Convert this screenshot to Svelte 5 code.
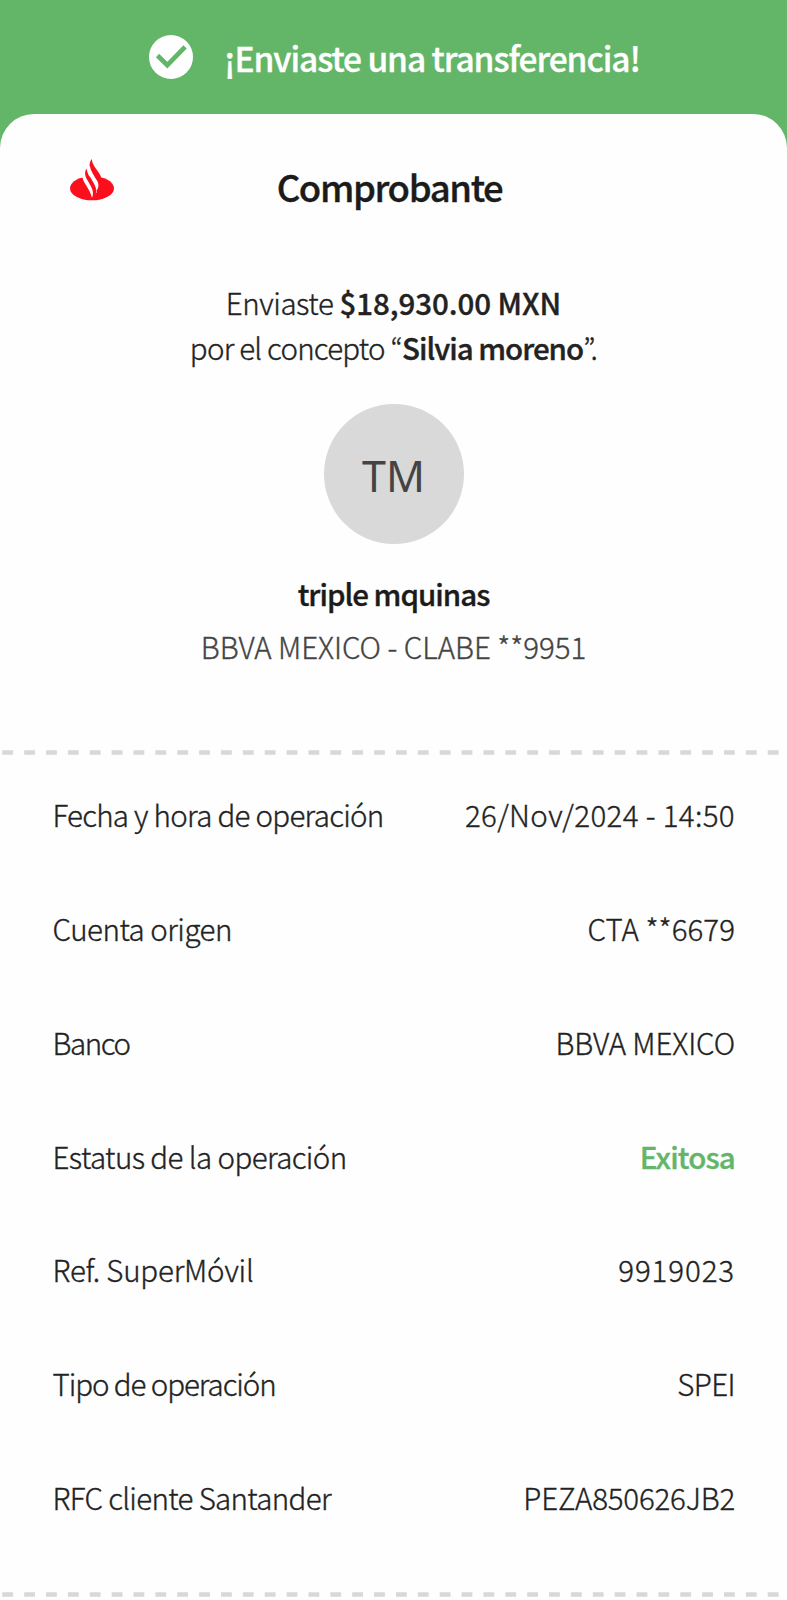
<script lang="ts">
	type Row = {
		label: string;
		value: string;
		labelTracking: number;
		valueTracking: number;
		success?: boolean;
	};

	const rows: Row[] = [
		{ label: 'Fecha y hora de operación', value: '26/Nov/2024 - 14:50', labelTracking: -0.72, valueTracking: 0.35 },
		{ label: 'Cuenta origen', value: 'CTA **6679', labelTracking: -0.5, valueTracking: 0.05 },
		{ label: 'Banco', value: 'BBVA MEXICO', labelTracking: -1.4, valueTracking: -0.1 },
		{ label: 'Estatus de la operación', value: 'Exitosa', labelTracking: -0.6, valueTracking: -0.8, success: true },
		{ label: 'Ref. SuperMóvil', value: '9919023', labelTracking: -0.2, valueTracking: 0.9 },
		{ label: 'Tipo de operación', value: 'SPEI', labelTracking: -1.08, valueTracking: -0.6 },
		{ label: 'RFC cliente Santander', value: 'PEZA850626JB2', labelTracking: -0.67, valueTracking: -0.2 }
	];
</script>

{#snippet divider()}
	<svg class="divider" width="787" height="5" viewBox="0 0 787 5">
		<line x1="2.3" y1="2.5" x2="779" y2="2.5" stroke="#d8d8d8" stroke-width="4.6" stroke-dasharray="10.8 11.07" />
	</svg>
{/snippet}

<div class="screen">
	<header class="banner">
		<svg class="check" width="44" height="44" viewBox="0 0 44 44">
			<circle cx="22" cy="22" r="22" fill="#fff" />
			<path d="M8.5 20.5l9.8 9.7 17.8-18.3" fill="none" stroke="#63b568" stroke-width="4.6" />
		</svg>
		<span>¡Enviaste una transferencia!</span>
	</header>

	<main class="card">
		<div class="title">
			<svg class="logo" width="44" height="42" viewBox="0 0 44 42">
				<ellipse cx="22" cy="29.3" rx="22" ry="12" fill="#fb0f1c" />
				<path d="M21.8 0C18.8 4 19 8 21.5 12.2L30 28l1.5-8C30.5 12.5 22.5 9 21.8 0z" fill="#fb0f1c" />
				<path d="M11.8 15.5C12.500 24 20 29.5 21.8 38.5L27 33L16.5 13z" fill="#fff" />
				<path d="M16.8 10C18 17 25 23 26.5 32C29.2 28 28.9 25 27 21.600C24.500 17 20.7 14 20 7z" fill="#fff" />
				<path d="M16.5 9.5C14.2 13.5 15 17 17.5 21.2C21 27.5 24.5 31.5 22.3 38.5L26 34.5C28 27 17.5 18.5 16.5 9.5z" fill="#fb0f1c" />
			</svg>
			<h1>Comprobante</h1>
		</div>

		<p class="message">
			<span class="amount-line">Enviaste <b>$18,930.00 MXN</b></span>
			<span class="concept-line">por el concepto “<b>Silvia moreno</b>”.</span>
		</p>

		<div class="avatar">TM</div>
		<div class="name">triple mquinas</div>
		<div class="account">BBVA MEXICO - CLABE **9951</div>

		{@render divider()}

		<div class="rows">
			{#each rows as row}
				<div class="row">
					<span style="letter-spacing: {row.labelTracking}px">{row.label}</span>
					<span class="value" class:success={row.success} style="letter-spacing: {row.valueTracking}px">{row.value}</span>
				</div>
			{/each}
		</div>

		{@render divider()}
	</main>
</div>

<style>
	:global(body) {
		background-color: #fefefe;
	}
	.screen {
		width: 787px;
		height: 1600px;
		overflow: hidden;
		background-color: #63b568;
		color: #222;
		font-family: 'Noto Sans CJK JP', 'Noto Sans', sans-serif;
		font-size: 29.5px;
		font-weight: 300;
		-webkit-text-stroke: 0.35px currentColor;
	}
	.banner {
		display: flex;
		align-items: center;
		gap: 31px;
		height: 114px;
		padding-left: 149px;
		color: #fff;
		font-size: 33.5px;
		font-weight: 500;
		line-height: 44px;
		letter-spacing: -1.08px;
		white-space: nowrap;
	}
	.banner span {
		padding-top: 2px;
	}
	.check {
		flex: none;
	}
	.card {
		display: flex;
		flex-direction: column;
		align-items: center;
		height: 1486px;
		background-color: #fefefe;
		border-radius: 34px 34px 0 0;
	}
	.title {
		display: grid;
		grid-template-columns: 44px 1fr 44px;
		align-items: center;
		width: 639px;
		height: 142px;
		padding-right: 8px;
	}
	.logo {
		margin-bottom: 10px;
	}
	h1 {
		margin: 0;
		padding-top: 4px;
		color: #1b1b1b;
		font-size: 36.5px;
		font-weight: 500;
		line-height: 56px;
		letter-spacing: -1.4px;
		text-align: center;
	}
	.message {
		display: flex;
		flex-direction: column;
		align-items: center;
		margin: 24px 0 35px;
		line-height: 44.5px;
		white-space: nowrap;
	}
	b {
		font-weight: 500;
	}
	.amount-line {
		letter-spacing: -0.45px;
	}
	.amount-line b {
		letter-spacing: -0.05px;
	}
	.concept-line {
		letter-spacing: -0.78px;
	}
	.concept-line b {
		letter-spacing: -1.02px;
	}
	.avatar {
		display: flex;
		align-items: center;
		justify-content: center;
		width: 140px;
		height: 140px;
		padding-top: 4px;
		box-sizing: border-box;
		border-radius: 50%;
		background-color: #d9d9d9;
		color: #444;
		font-family: 'Noto Sans', sans-serif;
		font-size: 43px;
		font-weight: 400;
		line-height: 60px;
		-webkit-text-stroke: 0;
	}
	.name {
		margin-top: 27px;
		color: #1b1b1b;
		font-weight: 500;
		line-height: 44px;
		letter-spacing: -1px;
	}
	.account {
		margin: 9px 0 82px;
		color: #444;
		line-height: 44px;
		letter-spacing: -0.05px;
	}
	.divider {
		display: block;
		flex: none;
	}
	.rows {
		width: 682.5px;
		margin: 2.4px 0 38px;
		padding-left: 0.5px;
	}
	.row {
		display: flex;
		align-items: center;
		justify-content: space-between;
		height: 113.8px;
		line-height: 44px;
		white-space: nowrap;
	}
	.value.success {
		color: #63b568;
		font-weight: 500;
	}
</style>
